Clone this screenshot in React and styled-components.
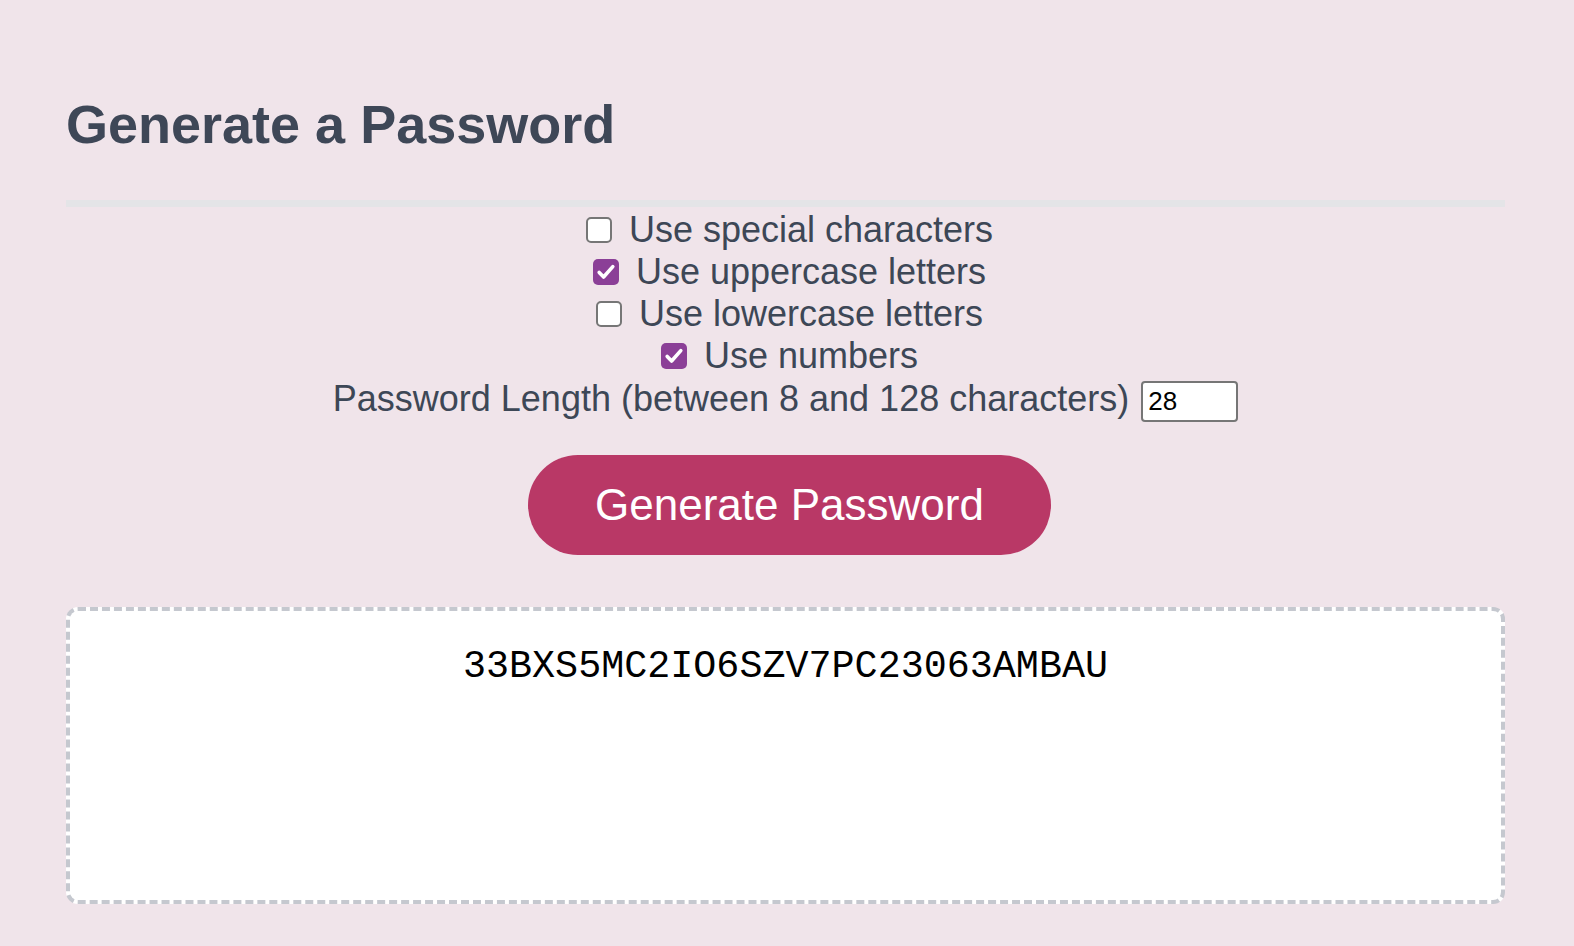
import React, { useState } from "react";
import styled, { createGlobalStyle } from "styled-components";

const GlobalStyle = createGlobalStyle`
  html, body {
    margin: 0;
    padding: 0;
    background: #f0e4ea;
  }
  body {
    font-family: "Liberation Sans", Arial, sans-serif;
    color: #3d4756;
  }
`;

const Wrapper = styled.main`
  width: 1439px;
  margin: 0 0 0 66px;
  padding-top: 93px;
  display: flex;
  flex-direction: column;
`;

const Header = styled.header`
  border-bottom: 7px solid #e4e4e7;
  padding-bottom: 45px;
`;

const Title = styled.h1`
  margin: 0;
  font-size: 54px;
  line-height: 62px;
  font-weight: 700;
  color: #3e4757;
`;

const Options = styled.section`
  display: flex;
  flex-direction: column;
  align-items: center;
  padding-top: 2px;
`;

const OptionRow = styled.label`
  display: flex;
  align-items: center;
  height: 42px;
  padding-left: 8px;
  font-size: 36px;
  line-height: 42px;
  color: #3d4756;
  cursor: pointer;
`;

const HiddenInput = styled.input.attrs({ type: "checkbox" })`
  position: absolute;
  opacity: 0;
  width: 0;
  height: 0;
  margin: 0;
`;

const Box = styled.span`
  box-sizing: border-box;
  display: inline-flex;
  align-items: center;
  justify-content: center;
  width: 26px;
  height: 26px;
  margin-right: 17px;
  border-radius: 5px;
  border: ${(p) => (p.$checked ? "none" : "2px solid #767676")};
  background: ${(p) => (p.$checked ? "#8b3f97" : "#ffffff")};
  flex-shrink: 0;
`;

const CheckMark = () => (
  <svg width="26" height="26" viewBox="0 0 26 26" aria-hidden="true">
    <path
      d="M6.2 13.4 L10.6 18 L19.8 7.6"
      fill="none"
      stroke="#ffffff"
      strokeWidth="3.6"
      strokeLinecap="round"
      strokeLinejoin="round"
    />
  </svg>
);

const LengthRow = styled.label`
  display: flex;
  align-items: center;
  gap: 12px;
  font-size: 36px;
  line-height: 42px;
  color: #3d4756;
  margin-top: -2px;
`;

const LengthInput = styled.input`
  box-sizing: border-box;
  width: 97px;
  height: 41px;
  margin-top: 6px;
  padding: 0 5px;
  border: 2px solid #767676;
  border-radius: 4px;
  background: #ffffff;
  font-family: "Liberation Sans", Arial, sans-serif;
  font-size: 26px;
  color: #000000;
  outline: none;
`;

const ButtonRow = styled.div`
  display: flex;
  justify-content: center;
  padding-left: 8px;
  margin-top: 33px;
`;

const GenerateButton = styled.button`
  width: 523px;
  height: 100px;
  border: none;
  border-radius: 50px;
  background: #b93866;
  color: #ffffff;
  font-family: "Liberation Sans", Arial, sans-serif;
  font-size: 44px;
  cursor: pointer;
`;

const Output = styled.div`
  box-sizing: border-box;
  margin-top: 52px;
  height: 297px;
  padding-top: 34px;
  background: #ffffff;
  border: 4px dashed #c5c8cf;
  border-radius: 12px;
  text-align: center;
  font-family: "Liberation Mono", "Courier New", monospace;
  font-size: 38.4px;
  color: #000000;
`;

const options = [
  { id: "special", label: "Use special characters", checked: false },
  { id: "upper", label: "Use uppercase letters", checked: true },
  { id: "lower", label: "Use lowercase letters", checked: false },
  { id: "numbers", label: "Use numbers", checked: true },
];

export default function App() {
  const [state, setState] = useState(
    Object.fromEntries(options.map((o) => [o.id, o.checked]))
  );
  const [length, setLength] = useState("28");

  return (
    <>
      <GlobalStyle />
      <Wrapper>
        <Header>
          <Title>Generate a Password</Title>
        </Header>
        <Options>
          {options.map((o) => (
            <OptionRow key={o.id}>
              <HiddenInput
                checked={state[o.id]}
                onChange={(e) => setState({ ...state, [o.id]: e.target.checked })}
              />
              <Box $checked={state[o.id]}>{state[o.id] && <CheckMark />}</Box>
              {o.label}
            </OptionRow>
          ))}
          <LengthRow>
            Password Length (between 8 and 128 characters)
            <LengthInput
              value={length}
              onChange={(e) => setLength(e.target.value)}
            />
          </LengthRow>
        </Options>
        <ButtonRow>
          <GenerateButton>Generate Password</GenerateButton>
        </ButtonRow>
        <Output>33BXS5MC2IO6SZV7PC23063AMBAU</Output>
      </Wrapper>
    </>
  );
}
